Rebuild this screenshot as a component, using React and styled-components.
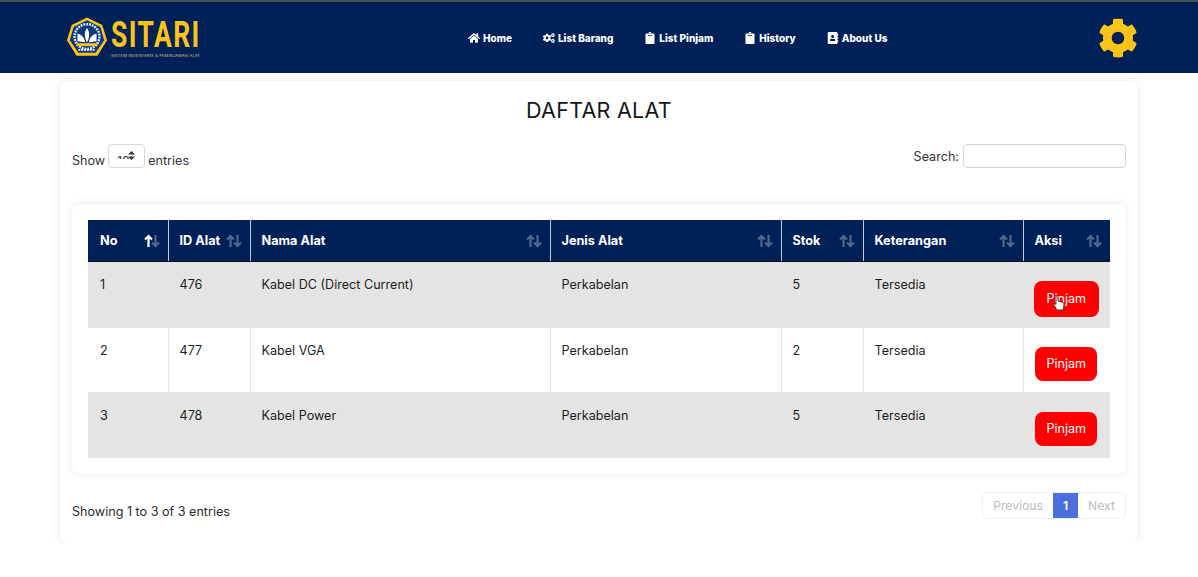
import React from 'react';
import styled, { createGlobalStyle } from 'styled-components';
import { FaHome, FaCogs, FaClipboard, FaAddressBook, FaCog } from 'react-icons/fa';

const GlobalStyle = createGlobalStyle`
  html, body { margin: 0; padding: 0; background: #fff; }
  body { font-family: 'Inter', 'Liberation Sans', sans-serif; color: #212529; }
  * { box-sizing: border-box; }
`;

const Header = styled.header`
  height: 73px;
  background: #002157;
  border-top: 2px solid #4a4f57;
  display: flex;
  align-items: center;
  padding: 0 60px 0 66px;
`;

const Brand = styled.div`
  width: 134px;
  display: flex;
  align-items: center;
  gap: 3px;
  flex: none;
  svg { flex: none; }
`;

const BrandText = styled.div`
  width: 89px;
  flex: none;
  display: flex;
  flex-direction: column;
  color: #fcc419;
`;

const BrandName = styled.span`
  font-family: 'Roboto', sans-serif;
  font-weight: 700;
  font-size: 37px;
  line-height: 36px;
  letter-spacing: 2px;
  white-space: nowrap;
  transform: scaleX(0.715);
  transform-origin: left;
`;

const BrandSub = styled.span`
  font-size: 4px;
  line-height: 6px;
  white-space: nowrap;
  color: #d9c77a;
  letter-spacing: 0.2px;
`;

const Nav = styled.nav`
  display: flex;
  align-items: center;
  gap: 31px;
  margin-left: 268px;
`;

const NavLink = styled.a`
  display: flex;
  align-items: center;
  gap: 3px;
  color: #fff;
  font-size: 10px;
  font-weight: 800;
  white-space: nowrap;
  svg { font-size: 12px; }
`;

const Gear = styled(FaCog)`
  margin-left: auto;
  font-size: 40px;
  color: #fcc419;
`;

const Card = styled.main`
  width: 1078px;
  height: 462px;
  margin: 8px 0 0 60px;
  padding: 0 12px;
  background: #fff;
  border-radius: 8px;
  box-shadow: 0 0 8px rgba(0, 0, 0, 0.09);
`;

const Title = styled.h1`
  margin: 0;
  padding-top: 16px;
  height: 63px;
  text-align: center;
  font-size: 21.5px;
  line-height: 26px;
  font-weight: 400;
  letter-spacing: 0.27px;
  color: #14171a;
`;

const Controls = styled.div`
  display: flex;
  justify-content: space-between;
  align-items: flex-start;
  height: 60px;
  font-size: 12.6px;
  color: #333;
`;

const ShowLabel = styled.label`
  display: flex;
  align-items: center;
  gap: 3px;
  height: 24px;
  padding-top: 8px;
`;

const LengthBox = styled.div`
  position: relative;
  width: 37px;
  height: 24px;
  margin-top: -8px;
  border: 1px solid #d5d7da;
  border-radius: 4px;
  background: #fff;
`;

const LengthValue = styled.div`
  height: 14px;
  overflow: hidden;
  padding: 9px 0 0 8px;
  font-size: 12px;
  line-height: 14px;
`;

const LengthArrows = styled.svg`
  position: absolute;
  top: 6px;
  right: 9px;
`;

const SearchLabel = styled.label`
  display: flex;
  align-items: center;
  gap: 4px;
`;

const SearchInput = styled.input`
  width: 163px;
  height: 24px;
  border: 1px solid #d2d4d7;
  border-radius: 4px;
  background: #fff;
`;

const TableCard = styled.section`
  height: 270px;
  padding: 16px;
  border-radius: 8px;
  background: #fff;
  box-shadow: 0 0 8px rgba(0, 0, 0, 0.09);
`;

const Table = styled.table`
  width: 1022px;
  table-layout: fixed;
  border-collapse: collapse;
  font-size: 12.6px;
`;

const HeadCell = styled.th`
  position: relative;
  height: 41px;
  padding: 0 11px;
  background: #002157;
  color: #fff;
  font-size: 12.7px;
  font-weight: 700;
  text-align: left;
  border-left: 1px solid #c5cbd6;
  border-bottom: 1px solid #111;
  &:first-child { border-left: 0; padding-left: 12px; }
`;

const SortIcon = styled.svg`
  position: absolute;
  right: 8px;
  top: 14px;
`;

const Row = styled.tr`
  height: ${(p) => (p.$tall ? 66 : 65)}px;
  background: ${(p) => (p.$shaded ? '#e4e4e4' : '#fff')};
`;

const Cell = styled.td`
  padding: 15px 11px 0;
  vertical-align: top;
  line-height: 16px;
  color: #1c1f22;
  border-left: 1px solid #e4e4e4;
  border-bottom: 1px solid #e4e4e4;
  &:first-child { border-left: 0; padding-left: 12px; }
`;

const ActionCell = styled(Cell)`
  padding: 4px 1px 0 0;
  text-align: center;
`;

const BorrowButton = styled.button`
  position: relative;
  width: ${(p) => (p.$hover ? 65 : 62)}px;
  height: ${(p) => (p.$hover ? 36 : 34)}px;
  margin-top: 15px;
  border: 0;
  border-radius: 8px;
  background: #fe0000;
  color: #fff;
  font-family: inherit;
  font-size: 12.6px;
`;

const Cursor = styled.svg`
  position: absolute;
  left: 19px;
  top: 14px;
`;

const Footer = styled.div`
  display: flex;
  justify-content: space-between;
  align-items: flex-start;
  padding-top: 18px;
  font-size: 12.6px;
  color: #2a2d31;
`;

const EntryInfo = styled.span`
  padding-top: 12px;
`;

const Pager = styled.div`
  display: flex;
  align-items: stretch;
  height: 27px;
  border: 1px solid #f0f0f2;
  border-radius: 5px;
  font-size: 12.2px;
  color: #b9bcc2;
`;

const PageLink = styled.span`
  display: flex;
  align-items: center;
  padding: 0 10px;
  background: ${(p) => (p.$active ? '#4c6fdc' : 'transparent')};
  color: ${(p) => (p.$active ? '#fff' : 'inherit')};
  font-weight: ${(p) => (p.$active ? 600 : 400)};
`;

const columns = [
  { label: 'No', width: 80, active: true },
  { label: 'ID Alat', width: 82 },
  { label: 'Nama Alat', width: 300 },
  { label: 'Jenis Alat', width: 231 },
  { label: 'Stok', width: 82 },
  { label: 'Keterangan', width: 160 },
  { label: 'Aksi', width: 87 },
];

const rows = [
  { no: 1, id: 476, name: 'Kabel DC (Direct Current)', type: 'Perkabelan', stock: 5, note: 'Tersedia' },
  { no: 2, id: 477, name: 'Kabel VGA', type: 'Perkabelan', stock: 2, note: 'Tersedia' },
  { no: 3, id: 478, name: 'Kabel Power', type: 'Perkabelan', stock: 5, note: 'Tersedia' },
];

const Logo = () => (
  <svg width="42" height="43" viewBox="0 0 44 44">
    <path d="M22 1 L38 9 L43 25 L33 41 L11 41 L1 25 L6 9 Z" fill="#fcc419" />
    <path d="M22 4 L36 11 L40 25 L31 38 L13 38 L4 25 L8 11 Z" fill="#0b3a82" />
    <circle cx="22" cy="21" r="13" fill="none" stroke="#dfe6f2" strokeWidth="2.6" strokeDasharray="2 1" />
    <path d="M22 12 C19 16 19 22 22 27 C25 22 25 16 22 12 Z" fill="#fff" />
    <path d="M12 18 C15 18 19 21 20 27 L12 26 Z M32 18 C29 18 25 21 24 27 L32 26 Z" fill="#fff" />
    <path d="M11 28 H33 V31 H11 Z" fill="#fcc419" />
    <path d="M13 35 H31" stroke="#fff" strokeWidth="2" strokeDasharray="2 1" />
  </svg>
);

const SortArrows = ({ active }) => (
  <SortIcon width="16" height="14" viewBox="0 0 16 14" fill="none" strokeWidth="2.2">
    <path d="M4.5 13 V2 M1 5.5 L4.5 2 L8 5.5" stroke={active ? '#fff' : '#52678c'} />
    <path d="M11.5 1 V12 M8 8.5 L11.5 12 L15 8.5" stroke="#52678c" />
  </SortIcon>
);

const HandCursor = () => (
  <Cursor width="12" height="16" viewBox="0 0 12 16">
    <path
      d="M3 1.5 C3 .5 5 .5 5 1.5 V6 L10 7.5 C11 8 11 9 11 10 L10 15 H4 L1 10 C.5 9 1.5 8 3 9.5 Z"
      fill="#fff"
      stroke="#333"
      strokeWidth="0.9"
    />
  </Cursor>
);

export default function App() {
  return (
    <>
      <GlobalStyle />
      <Header>
        <Brand>
          <Logo />
          <BrandText>
            <BrandName>SITARI</BrandName>
            <BrandSub>SISTEM INVENTARIS &amp; PEMINJAMAN ALAT</BrandSub>
          </BrandText>
        </Brand>
        <Nav>
          <NavLink><FaHome />Home</NavLink>
          <NavLink><FaCogs />List Barang</NavLink>
          <NavLink><FaClipboard />List Pinjam</NavLink>
          <NavLink><FaClipboard />History</NavLink>
          <NavLink><FaAddressBook />About Us</NavLink>
        </Nav>
        <Gear />
      </Header>
      <Card>
        <Title>DAFTAR ALAT</Title>
        <Controls>
          <ShowLabel>
            Show
            <LengthBox>
              <LengthValue>10</LengthValue>
              <LengthArrows width="7" height="9" viewBox="0 0 7 9" fill="#333">
                <path d="M3.5 0 L7 3.5 H0 Z M3.5 9 L0 5.5 H7 Z" />
              </LengthArrows>
            </LengthBox>
            entries
          </ShowLabel>
          <SearchLabel>
            Search:
            <SearchInput />
          </SearchLabel>
        </Controls>
        <TableCard>
          <Table>
            <colgroup>
              {columns.map((c) => <col key={c.label} width={c.width} />)}
            </colgroup>
            <thead>
              <tr>
                {columns.map((c) => (
                  <HeadCell key={c.label}>
                    {c.label}
                    <SortArrows active={c.active} />
                  </HeadCell>
                ))}
              </tr>
            </thead>
            <tbody>
              {rows.map((r, i) => (
                <Row key={r.id} $shaded={i % 2 === 0} $tall={i === 0}>
                  <Cell>{r.no}</Cell>
                  <Cell>{r.id}</Cell>
                  <Cell>{r.name}</Cell>
                  <Cell>{r.type}</Cell>
                  <Cell>{r.stock}</Cell>
                  <Cell>{r.note}</Cell>
                  <ActionCell>
                    <BorrowButton $hover={i === 0}>
                      Pinjam
                      {i === 0 && <HandCursor />}
                    </BorrowButton>
                  </ActionCell>
                </Row>
              ))}
            </tbody>
          </Table>
        </TableCard>
        <Footer>
          <EntryInfo>Showing 1 to 3 of 3 entries</EntryInfo>
          <Pager>
            <PageLink>Previous</PageLink>
            <PageLink $active>1</PageLink>
            <PageLink>Next</PageLink>
          </Pager>
        </Footer>
      </Card>
    </>
  );
}
